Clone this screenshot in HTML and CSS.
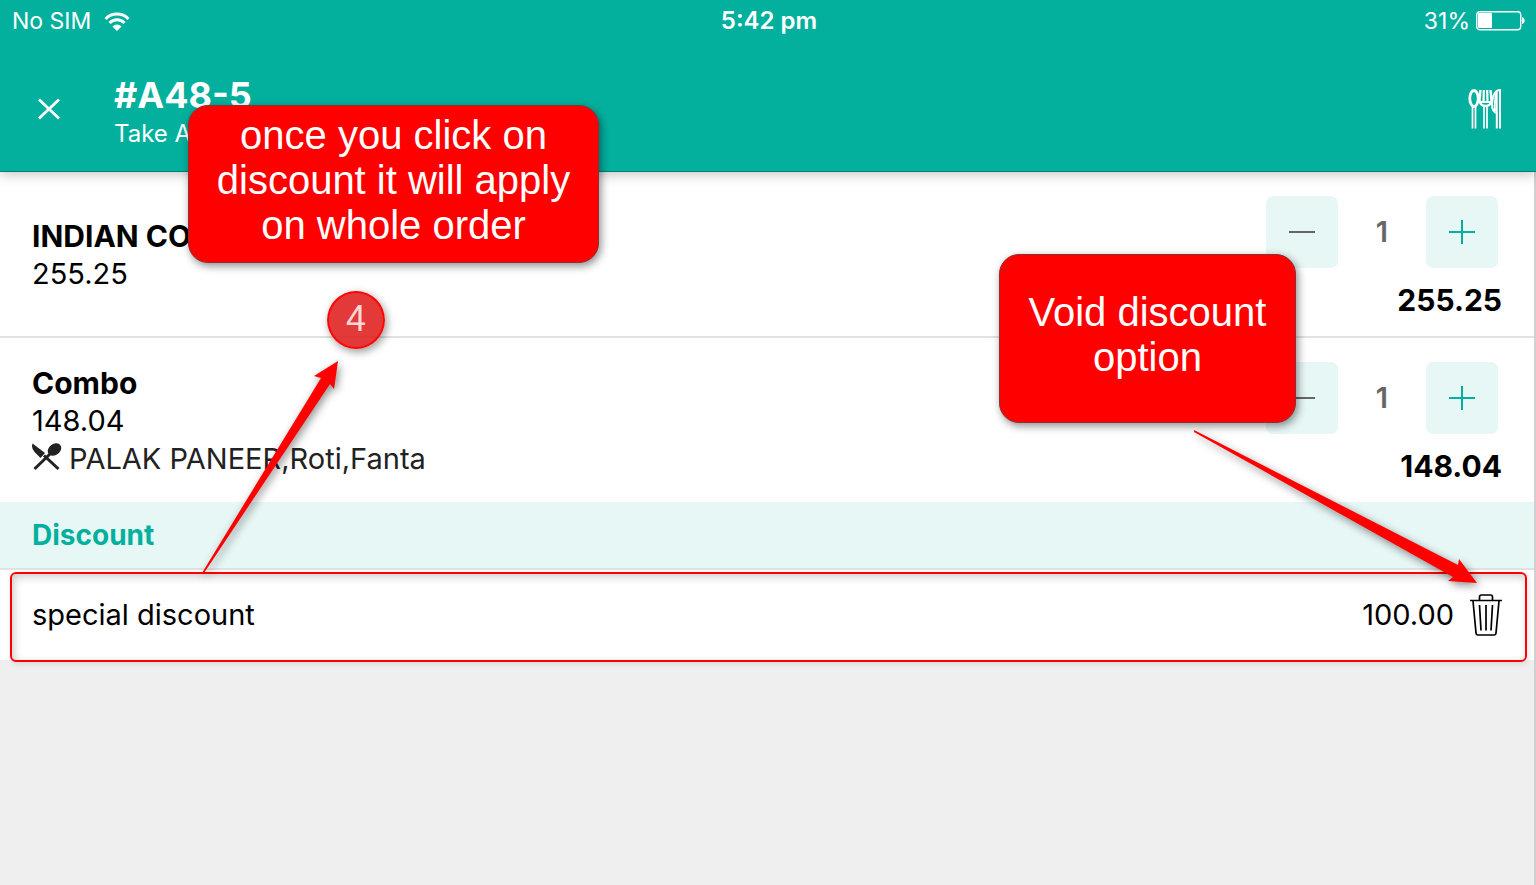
FILE: index.html
```html
<!DOCTYPE html>
<html lang="en">
<head>
    <meta charset="UTF-8">
    <meta name="viewport" content="width=device-width, initial-scale=1.0">
    <title>Order #A48-5</title>
    <link rel="stylesheet" href="styles.css">
</head>
<body>

    <header class="app-header">
        <div class="status-bar">
            <div class="status-left">
                <span>No SIM</span>
                <svg class="wifi-icon" viewBox="0 0 26 19" width="26" height="19" aria-hidden="true">
                    <path d="M1.500 7A15.800 15.800 0 0 1 24.500 7" fill="none" stroke="#fff" stroke-width="3"/>
                    <path d="M5.500 11A10.300 10.300 0 0 1 20.500 11" fill="none" stroke="#fff" stroke-width="2.800"/>
                    <path d="M13 19L8.500 14.500A6.200 6.200 0 0 1 17.500 14.500Z" fill="#fff"/>
                </svg>
            </div>
            <span class="status-time">5:42 pm</span>
            <div class="status-right">
                <span>31%</span>
                <svg viewBox="0 0 50 20" width="50" height="20" aria-hidden="true">
                    <rect x="0.700" y="0.700" width="44" height="18" rx="3" fill="none" stroke="#fff" stroke-width="1.400"/>
                    <rect x="2" y="2" width="14" height="15" rx="1" fill="#fff"/>
                    <path d="M46 6C49.500 6.500 49.500 12.500 46 13Z" fill="#fff"/>
                </svg>
            </div>
        </div>

        <div class="toolbar">
            <button class="icon-button close-button" aria-label="Close">
                <svg viewBox="0 0 22 22" width="22" height="22">
                    <path d="M1 1.500L21 20.500M21 1.500L1 20.500" fill="none" stroke="#fff" stroke-width="2.800"/>
                </svg>
            </button>
            <div class="order-title">
                <h1>#A48-5</h1>
                <p>Take Away</p>
            </div>
            <button class="icon-button" aria-label="Menu">
                <svg viewBox="0 0 34 40" width="34" height="40" fill="none" stroke="#fff">
                    <ellipse cx="6" cy="9.500" rx="4.200" ry="8" stroke-width="2.800"/>
                    <path d="M4.500 18V39.500M7.500 18V39.500" stroke-width="1.700"/>
                    <path d="M12.500 1L11.500 11Q12 17 17.500 17T23.500 11L22.500 1" stroke-width="2.400"/>
                    <path d="M15.800 1L15.500 13M19.200 1L19.500 13" stroke-width="2.200"/>
                    <path d="M12 13H23" stroke-width="2"/>
                    <path d="M16 17V39.500M19 17V39.500" stroke-width="1.700"/>
                    <path d="M32 39.500V1C26.500 1 24 9 24 15Q24 23 28.800 24V39.500" stroke-width="2"/>
                    <path d="M28.800 24V3Q26 12 27 22" stroke-width="1.800"/>
                </svg>
            </button>
        </div>
    </header>

    <main class="order">
        <ul class="item-list">
            <li class="item">
                <div class="item-info">
                    <h2>INDIAN COMBO</h2>
                    <p>255.25</p>
                </div>
                <div class="item-side">
                    <div class="stepper">
                        <button class="step minus" aria-label="Decrease">
                            <svg viewBox="0 0 26 26" width="26" height="26"><path d="M0 13H26"/></svg>
                        </button>
                        <span class="quantity">1</span>
                        <button class="step plus" aria-label="Increase">
                            <svg viewBox="0 0 26 26" width="26" height="26"><path d="M0 13H26M13 1V25"/></svg>
                        </button>
                    </div>
                    <strong class="item-total">255.25</strong>
                </div>
            </li>
            <li class="item">
                <div class="item-info">
                    <h2>Combo</h2>
                    <p>148.04</p>
                    <p class="item-contents">
                        <svg viewBox="0 0 30 32" width="30" height="32" aria-hidden="true">
                            <path d="M0.500 0.500L13 10L8.500 15L2.500 9Q-1 5 0.500 0.500Z" fill="#222"/>
                            <ellipse cx="22.500" cy="6.500" rx="7.200" ry="5.600" transform="rotate(-35 22.500 6.500)" fill="#222"/>
                            <path d="M18.500 10.500L2.500 26M12 12.500L26.500 26" fill="none" stroke="#222" stroke-width="3"/>
                        </svg>
                        <span>PALAK PANEER,Roti,Fanta</span>
                    </p>
                </div>
                <div class="item-side">
                    <div class="stepper">
                        <button class="step minus" aria-label="Decrease">
                            <svg viewBox="0 0 26 26" width="26" height="26"><path d="M0 13H26"/></svg>
                        </button>
                        <span class="quantity">1</span>
                        <button class="step plus" aria-label="Increase">
                            <svg viewBox="0 0 26 26" width="26" height="26"><path d="M0 13H26M13 1V25"/></svg>
                        </button>
                    </div>
                    <strong class="item-total">148.04</strong>
                </div>
            </li>
        </ul>

        <section class="discount">
            <h2 class="discount-heading">Discount</h2>
            <div class="discount-row">
                <span class="discount-name">special discount</span>
                <span>100.00</span>
                <button class="icon-button" aria-label="Void discount">
                    <svg viewBox="0 0 32 42" width="32" height="42" fill="none" stroke="#000" stroke-width="1.700">
                        <path d="M0 6.500H32M9.500 6V3Q9.500 1 11.500 1H20.500Q22.500 1 22.500 3V6"/>
                        <path d="M3 7L6 39Q6.200 41 8 41H24Q25.800 41 26 39L29 7"/>
                        <path d="M9.500 11L11 36.500M16 11V36.500M22.500 11L21 36.500"/>
                    </svg>
                </button>
            </div>
        </section>
    </main>

    <!-- Walkthrough notes drawn over the order -->
    <div class="note note-apply">once you click on<br>discount it will apply<br>on whole order</div>
    <div class="note note-void">Void discount<br>option</div>
    <div class="note-step">4</div>
    <div class="note-frame"></div>
    <svg class="arrow arrow-apply" viewBox="0 0 136 212" width="136" height="212" aria-hidden="true">
        <path d="M-1 212L118 17L111 15L135 0L131 28L127 23L1 212Z" fill="#f00"/>
    </svg>
    <svg class="arrow arrow-void" viewBox="0 0 284 154" width="284" height="154" aria-hidden="true">
        <path d="M0 0L264 135L265 129L283 153L254 151L259 147L0 2Z" fill="#f00"/>
    </svg>

</body>
</html>
```
FILE: styles.css
```css
:root {
    --theme-primary: #03b09e;
    --theme-light: #e7f7f6;
    --page-bg: #efefef;
    --line: #e2e2e2;
    --note-red: #ff0000;
}

* {
    margin: 0;
    padding: 0;
    box-sizing: border-box;
}

body {
    position: relative;
    display: flex;
    flex-direction: column;
    min-height: 100vh;
    background-color: var(--page-bg);
    color: #000;
    font-family: 'Inter', sans-serif;
    font-size: 29px;
    line-height: 38px;
}

button {
    border: none;
    background: none;
    cursor: pointer;
}

svg {
    display: block;
    flex-shrink: 0;
}

.icon-button {
    display: flex;
    align-items: center;
    justify-content: center;
}

/* Header */
.app-header {
    position: relative;
    background-color: var(--theme-primary);
    border-bottom: 1px solid #028074;
    box-shadow: 0 2px 12px rgba(0, 0, 0, 0.25);
    color: #fff;
}

.status-bar {
    display: grid;
    grid-template-columns: 1fr auto 1fr;
    align-items: center;
    height: 42px;
    padding: 0 10px 0 12px;
    font-size: 23px;
}

.status-left,
.status-right {
    display: flex;
    align-items: center;
    gap: 13px;
}

.status-right {
    justify-content: flex-end;
    gap: 6px;
}

.status-time {
    font-size: 24px;
    font-weight: 600;
}

.toolbar {
    display: flex;
    align-items: center;
    padding: 24px 34px 20px 38px;
}

.order-title {
    flex-grow: 1;
    padding: 8px 0 0 54px;
}

.order-title h1 {
    font-size: 36px;
    line-height: 42px;
}

.order-title p {
    font-size: 24px;
    line-height: 35px;
}

/* Order items */
.order {
    flex-grow: 1;
    border-right: 2px solid #d0d0d0;
}

.item-list {
    list-style: none;
}

.item {
    display: flex;
    align-items: center;
    justify-content: space-between;
    min-height: 164px;
    padding: 2px 32px 0;
    background-color: #fff;
}

.item + .item {
    min-height: 166px;
    border-top: 2px solid var(--line);
}

.item h2 {
    font-size: 30px;
}

.discount h2 {
    font-size: 28px;
}

.item-contents {
    display: flex;
    align-items: center;
    gap: 7px;
    color: #222;
}

.item-side {
    display: flex;
    flex-direction: column;
    align-items: flex-end;
    gap: 13px;
    padding-top: 4px;
}

.item-total {
    font-size: 30px;
}

.stepper {
    display: flex;
    align-items: center;
    margin-right: 4px;
}

.step {
    display: flex;
    align-items: center;
    justify-content: center;
    width: 72px;
    height: 72px;
    border-radius: 7px;
    background-color: var(--theme-light);
    stroke: var(--theme-primary);
    stroke-width: 2px;
}

.step.minus {
    stroke: #666;
}

.quantity {
    width: 88px;
    color: #666;
    font-weight: 600;
    text-align: center;
}

/* Discount */
.discount-heading {
    padding: 14px 32px;
    background-color: var(--theme-light);
    border-bottom: 2px solid var(--line);
    color: var(--theme-primary);
}

.discount-row {
    display: flex;
    align-items: center;
    gap: 16px;
    min-height: 90px;
    padding: 0 32px;
    background-color: #fff;
}

.discount-name {
    flex-grow: 1;
}

/* Notes over the page */
.note,
.note-step,
.note-frame,
.arrow {
    position: absolute;
}

.note {
    border: 1px solid #8c3030;
    border-radius: 20px;
    background-color: var(--note-red);
    box-shadow: 2px 3px 8px rgba(0, 0, 0, 0.45);
    color: #fff;
    font-family: 'Liberation Sans', Arial, sans-serif;
    font-size: 40px;
    line-height: 45px;
    text-align: center;
}

.note-apply {
    top: 105px;
    left: 188px;
    width: 411px;
    padding: 7px 0 14px;
}

.note-void {
    top: 254px;
    right: 240px;
    width: 297px;
    padding: 35px 0 42px;
}

.note-step {
    top: 291px;
    left: 327px;
    width: 58px;
    height: 58px;
    border: 2px solid rgba(255, 0, 0, 0.9);
    border-radius: 50%;
    background-color: rgba(224, 36, 36, 0.9);
    box-shadow: 2px 3px 8px rgba(0, 0, 0, 0.4);
    color: #fcd8d8;
    font-family: 'Liberation Sans', Arial, sans-serif;
    font-size: 36px;
    line-height: 52px;
    text-align: center;
}

.note-frame {
    top: 572px;
    left: 10px;
    right: 9px;
    height: 90px;
    border: 2px solid var(--note-red);
    border-radius: 6px;
    box-shadow: inset 2px 3px 8px rgba(0, 0, 0, 0.2), 1px 2px 6px rgba(0, 0, 0, 0.1);
    pointer-events: none;
}

.arrow {
    overflow: visible;
    filter: drop-shadow(2px 3px 4px rgba(0, 0, 0, 0.45));
    pointer-events: none;
}

.arrow-apply {
    top: 361px;
    left: 203px;
}

.arrow-void {
    top: 430px;
    right: 58px;
}
```
